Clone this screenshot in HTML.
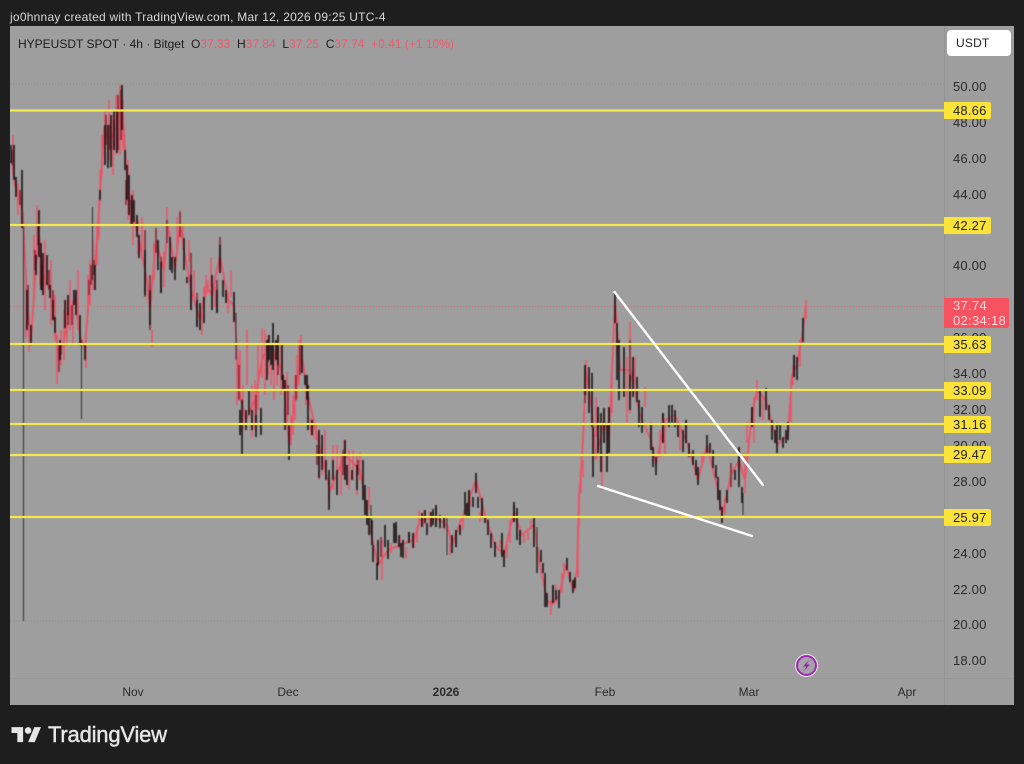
<!DOCTYPE html>
<html><head><meta charset="utf-8">
<style>
html,body{margin:0;padding:0;background:#1e1e1e;width:1024px;height:764px;overflow:hidden}
body{position:relative;font-family:"Liberation Sans",sans-serif}
.t{position:absolute;white-space:nowrap}
#hd{left:10px;top:10px;font-size:12px;color:#d8d8d8;letter-spacing:.24px;line-height:14px}
#chart{position:absolute;left:10px;top:26px;width:1004px;height:679px;background:#9e9e9e}
#leg{left:18px;top:37px;font-size:12px;line-height:14px;color:#1c1c1c}
#leg b{font-weight:normal;color:#ef5a6c}
.p{left:953px;font-size:13px;line-height:15px;color:#2a2a2a;letter-spacing:.2px}
.y{position:absolute;left:944px;width:47px;height:17px;background:#fbe33a;border-radius:0 2px 2px 0;color:#222;font-size:13px;line-height:17px;text-indent:9px;letter-spacing:.2px}
.m{top:685px;font-size:12px;line-height:14px;color:#2a2a2a;transform:translateX(-50%)}
#usdt{position:absolute;left:947px;top:30px;width:64px;height:26px;background:#fff;border-radius:4px;font-size:12px;line-height:26px;color:#222;text-indent:9px;letter-spacing:.2px}
#cur{position:absolute;left:944px;top:298px;width:56px;height:30px;padding-left:9px;background:#f6525f;border-radius:0 2px 2px 0;color:#ffd9dd;font-size:13px;line-height:15px;letter-spacing:.3px;white-space:nowrap}
#tv{left:48px;top:722px;font-size:22px;line-height:26px;color:#e6e6e6;-webkit-text-stroke:.45px #e6e6e6;letter-spacing:-.2px}
svg{position:absolute;left:0;top:0}
#candles{filter:blur(.45px)}
</style></head>
<body>
<div class="t" id="hd">jo0hnnay created with TradingView.com, Mar 12, 2026 09:25 UTC-4</div>
<div id="chart"></div>
<div class="t" id="leg">HYPEUSDT SPOT · 4h · Bitget &nbsp;O<b>37.33</b> &nbsp;H<b>37.84</b> &nbsp;L<b>37.25</b> &nbsp;C<b>37.74</b> &nbsp;<b>+0.41 (+1.10%)</b></div>

<svg width="1024" height="764" viewBox="0 0 1024 764" fill="none">
<path d="M944.5 26V705" stroke="#949494"/>
<path d="M10 678.5H1014" stroke="#979797"/>
<path d="M10 84H944" stroke="#878787" stroke-dasharray="1 2" opacity=".7"/>
<path d="M10 621H944" stroke="#878787" stroke-dasharray="1 2" opacity=".7"/>
<path d="M10 306.5H944" stroke="#e0606c" stroke-dasharray="1 2" opacity=".7"/>

<g id="candles">
<!-- continuous price trace -->
<polyline stroke="#ee5064" stroke-width="1.800" points="11,155 15,185 20,200 23,215 27,300 31,340 36,265 39,235 43,275 50,290 55,325 58,360 64,340 70,310 75,300 80,335 85,350 90,280 95,265 100,195 104,130 110,140 117,125 122,100 127,180 133,215 140,245 147,280 150,310 156,240 164,270 168,225 175,270 180,225 185,255 191,290 200,320 206,285 212,295 220,255 228,300 234,305 240,395 246,420 255,400 262,360 268,345 275,355 283,375 289,445 295,400 301,350 308,395 320,450 330,490 345,455 360,470 369,525 378,565 388,550 400,545 414,540 420,520 436,518 447,525 452,545 465,510 476,480 485,515 495,545 504,555 514,512 522,535 534,525 540,565 547,600 552,605 559,595 566,565 573,590 577,570 579,500 583,440 586,370 592,410 596,460 604,420 609,440 615,300 620,370 630,370 640,415 651,440 656,465 665,420 675,415 686,440 698,480 707,445 718,490 722,515 731,475 739,460 745,480 752,415 757,390 766,400 777,445 788,435 792,375 797,365 803,330 806,305"/>
<!-- red wicks -->
<path stroke="#ee5064" stroke-width="1.500" d="M13 135V175M18 183V215M26 270V338M29 320V352M34 235V300M37 205V260M40 240V285M45 240V310M51 260V325M55 295V340M57 335V384M61 330V365M64 310V360M67 300V345M70 280V330M73 300V345M78 270V330M86 340V368M88 275V312M90 260V305M93 240V290M95 255V290M97 225V265M99 200V240M100 170V205M102 135V175M105 110V165M109 100V160M113 115V175M116 95V155M120 85V155M123 100V150M128 160V220M133 190V245M138 220V255M142 217V260M152 330V347M154 243V280M164 252V287M167 207V243M177 217V255M180 210V237M183 225V250M189 240V262M194 270V300M202 313V335M204 287V303M206 275V297M208 280V293M211 257V287M215 287V307M228 293V313M231 270V297M237 360V405M240 350V400M243 385V430M247 330V385M252 385V437M255 380V430M258 345V410M262 328V378M265 330V395M268 335V375M271 345V385M274 350V400M277 340V385M281 345V395M287 372V425M291 415V445M293 395V435M295 375V420M297 355V400M299 340V385M301 335V365M306 375V405M311 418V435M313 420V437M316 423V440M319 430V480M322 435V475M325 430V470M329 470V505M333 445V490M337 445V480M341 455V495M344 440V475M349 450V490M353 450V480M357 455V495M360 452V480M366 500V515M369 487V510M382 540V580M391 543V553M400 535V550M406 547V559M414 535V548M417 527V543M419 510V527M424 510V525M430 512V527M445 515V530M450 543V555M460 525V535M463 517V530M470 497V507M480 512V522M500 540V547M507 543V558M510 520V543M514 502V522M520 530V545M524 535V543M528 532V540M531 520V528M551 600V615M556 585V603M562 573V593M564 563V575M575 578V590M578 527V577M579 493V527M581 477V493M583 460V477M586 360V395M596 397V437M602 453V490M612 377V413M627 357V423M630 322V413M635 357V385M645 387V407M660 430V457M665 420V455M672 405V423M680 430V450M702 453V467M725 497V515M731 463V487M745 453V493M747 422V443M754 397V443M757 380V400M763 397V420M791 380V422M793 365V385M800 340V367M806 300V318"/>
<!-- dark red bodies -->
<path stroke="#8e2d3a" stroke-width="1.700" d="M12 150V165M20 190V205M28 285V325M35 250V270M38 225V245M42 265V290M49 270V290M53 290V320M59 345V372M61 345V355M68 310V325M72 305V325M89 280V295M91 265V285M94 260V275M106 115V145M110 125V150M114 120V150M118 95V150M121 90V140M126 180V205M131 200V225M150 275V330M145 230V297M156 228V253M161 257V293M167 220V243M180 212V237M191 253V310M197 293V327M217 280V313M220 237V273M239 365V400M256 395V420M268 340V362M273 345V365M278 345V375M288 385V415M296 375V400M300 345V375M312 420V432M317 445V465M329 478V500M343 450V475M358 460V475M381 537V557M396 525V543M409 532V543M422 515V527M436 505V527M456 530V547M469 490V517M482 500V518M514 505V522M553 585V603M575 577V588M585 370V403M598 407V453M604 408V443M609 407V453M630 340V400M651 423V450M663 413V443M686 420V443M731 463V487M739 447V470M752 407V427M794 355V377"/>
<!-- black -->
<path stroke="#141414" stroke-width="1.600" d="M11 145V163M14 145V180M16 177V197M22 170V228M27 290V330M31 325V345M36 255V275M39 210V257M41 243V290M43 253V295M47 255V285M50 285V298M53 300V320M55 317V333M60 340V360M65 300V328M68 295V315M74 290V305M76 290V315M80 315V345M85 345V360M95 265V290M100 190V200M105 125V165M108 125V168M111 115V167M114 110V150M117 110V153M122 85V130M125 150V170M127 165V200M129 175V215M132 195V225M134 200V222M137 215V237M139 235V258M145 250V295M150 290V325M158 240V270M161 262V293M170 237V270M172 257V273M175 257V280M184 238V270M187 277V283M191 275V310M197 300V327M200 303V330M204 297V323M212 275V310M217 290V313M220 245V273M223 280V297M226 290V303M234 292V322M240 410V435M242 400V455M246 410V430M249 390V415M252 410V430M256 415V437M261 408V435M267 340V380M269 335V360M271 345V365M273 323V370M276 340V360M278 335V365M282 345V380M283 375V390M285 380V430M289 425V460M302 345V373M305 375V385M307 375V400M308 385V430M312 420V435M319 430V478M322 435V470M326 460V480M329 470V510M333 460V480M337 470V495M345 440V480M347 465V485M352 470V480M357 465V490M363 460V500M365 485V515M367 500V525M369 517V535M372 520V545M373 545V562M377 563V580M378 540V565M385 525V547M388 540V559M394 523V543M396 522V543M399 535V547M401 543V557M403 540V558M409 532V543M413 533V548M422 513V527M425 510V523M427 523V535M431 512V527M433 509V525M436 505V527M440 515V528M444 517V528M452 535V553M456 530V547M460 525V535M465 492V515M467 503V518M469 490V517M473 497V507M476 473V493M478 497V508M482 498V518M485 517V523M488 520V535M491 533V548M495 542V557M502 533V557M504 550V567M514 502V522M517 508V540M520 530V545M534 517V547M537 547V573M541 550V562M543 563V573M545 573V607M547 593V607M553 585V603M556 590V600M559 590V608M567 558V570M570 572V582M573 580V593M575 578V588M585 365V395M589 367V413M592 373V427M593 427V477M598 407V453M601 413V472M604 408V443M607 423V472M609 407V453M615 292V323M617 323V380M619 340V400M624 347V397M630 375V410M633 357V397M637 377V402M639 400V427M642 407V433M651 423V450M653 447V467M656 457V475M663 413V443M669 405V427M672 405V423M675 410V427M678 423V437M683 430V452M686 420V443M689 443V457M693 450V465M696 460V475M698 467V485M707 435V453M710 443V453M713 450V468M716 465V478M718 477V500M720 490V510M722 507V523M727 490V503M735 470V480M739 447V487M742 487V503M752 407V427M760 390V417M766 388V410M769 405V420M772 420V440M775 430V443M777 423V453M780 425V440M783 437V448M786 430V443M788 422V440M794 355V377M797 357V380M803 318V342"/>
<!-- thin grey wicks -->
<path stroke="#2f2f2f" stroke-width="1" d="M23.500 227V621M81.500 340V419M92.500 207V280M236 313V360M371 505V535M447 518V555M537 527V573M743 493V515"/>
</g>

<!-- yellow lines -->
<path stroke="#f4e84b" stroke-width="2.200" d="M10 110.500H944M10 225H944M10 344H944M10 390H944M10 424H944M10 455H944M10 517H944"/>
<!-- white trend lines -->
<path stroke="#fff" stroke-width="2.400" stroke-linecap="round" d="M614.500 292L763 485M598 486L752 536"/>

<!-- lightning badge -->
<circle cx="806.500" cy="665.500" r="11.500" fill="#f2eaf4"/>
<circle cx="806.500" cy="665.500" r="9.500" fill="#a8a0aa" stroke="#9c27b0" stroke-width="2"/>
<path d="M809.500 659.500L803 666.500H806.500L803.500 671.500L810 664.500H806.500Z" fill="#8e24aa"/>

<!-- logo -->
<g transform="translate(11.500 723) scale(.83)" fill="#e6e6e6">
<path d="M14 23H7V12H0V5h14v18zM28 23h-8l7.500-18h8L28 23z"/>
<circle cx="20" cy="9" r="4"/>
</g>
</svg>

<div class="t p" style="top:79px">50.00</div>
<div class="t p" style="top:115px">48.00</div>
<div class="t p" style="top:151px">46.00</div>
<div class="t p" style="top:187px">44.00</div>
<div class="t p" style="top:258px">40.00</div>
<div class="t p" style="top:330px">36.00</div>
<div class="t p" style="top:366px">34.00</div>
<div class="t p" style="top:402px">32.00</div>
<div class="t p" style="top:438px">30.00</div>
<div class="t p" style="top:474px">28.00</div>
<div class="t p" style="top:546px">24.00</div>
<div class="t p" style="top:582px">22.00</div>
<div class="t p" style="top:617px">20.00</div>
<div class="t p" style="top:653px">18.00</div>

<div class="y" style="top:102px">48.66</div>
<div class="y" style="top:217px">42.27</div>
<div class="y" style="top:336px">35.63</div>
<div class="y" style="top:382px">33.09</div>
<div class="y" style="top:416px">31.16</div>
<div class="y" style="top:446px">29.47</div>
<div class="y" style="top:509px">25.97</div>

<div id="cur">37.74<br>02:34:18</div>
<div id="usdt">USDT</div>

<div class="t m" style="left:133px">Nov</div>
<div class="t m" style="left:288px">Dec</div>
<div class="t m" style="left:446px;font-weight:bold">2026</div>
<div class="t m" style="left:605px">Feb</div>
<div class="t m" style="left:749px">Mar</div>
<div class="t m" style="left:907px">Apr</div>

<div class="t" id="tv">TradingView</div>
</body></html>
